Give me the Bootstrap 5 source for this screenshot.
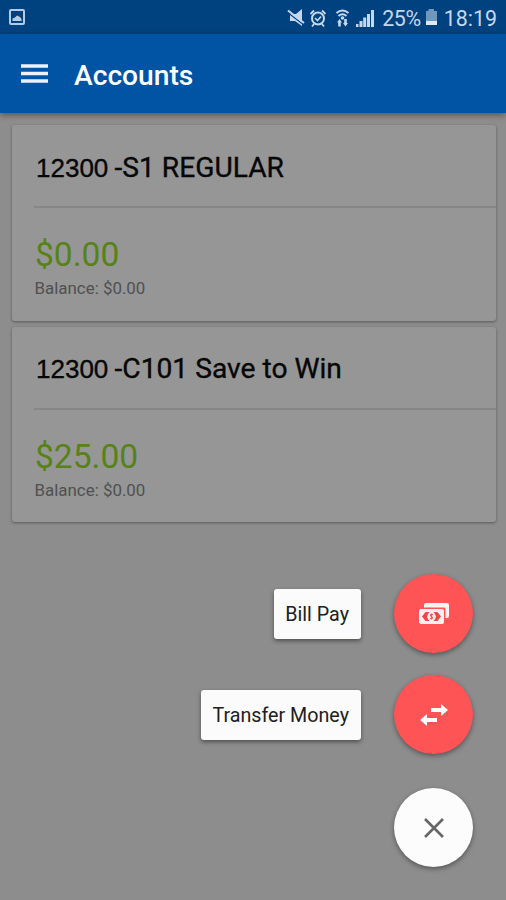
<!DOCTYPE html>
<html lang="en">
<head>
<meta charset="utf-8">
<meta name="viewport" content="width=device-width, initial-scale=1">
<title>Accounts</title>
<link href="https://cdn.jsdelivr.net/npm/bootstrap@5.3.0/dist/css/bootstrap.min.css" rel="stylesheet">
<style>
body{font-family:Roboto,sans-serif;background:#8d8d8d;height:900px;overflow:hidden;color:#070707}
.status-bar{height:34px;background:#00427f;color:#c6d8ee;padding:0 9px 0 8px}
.status-text{font-size:21.4px;line-height:34px;padding-top:3px}
.battery-pct{letter-spacing:-.4px}
.app-bar{height:79px;background:#0054a3;box-shadow:0 2px 6px rgba(0,0,0,.4);padding-left:21px}
.app-title{font-size:28.2px;font-weight:500;line-height:36px;margin:4px 0 0 26px}
.accounts{padding:12px 10px 0 12px;gap:6px}
.account{height:195.5px;border:0;border-radius:3px;background:#969696;color:#070707;box-shadow:0 1px 3px rgba(0,0,0,.38)}
.account-head{height:83px;margin-left:22px;border-bottom:2px solid #878787;padding:5px 0 0 2px;-webkit-text-stroke:.35px #070707}
.account-no{font:26px "Liberation Sans",sans-serif;width:78.500px}
.account-name{font-size:28.2px}
.amount{font-size:33.600px;line-height:40px;color:#568218;margin:27px 0 0 23px}
.balance{font-size:16.9px;line-height:20px;color:#505050;margin:3px 0 0 22.5px}
.actions{padding:0 33px 33px 0}
.action-label{background:#fbfbfb;border-radius:3px;height:50px;padding:3px 12px 0 11.500px;font-size:19.7px;color:#202020;box-shadow:0 2px 4px rgba(0,0,0,.45);margin-right:33px}
.fab{width:79px;height:79px;border:0;border-radius:50%;background:#ff5456;color:#fff;box-shadow:0 2px 5px rgba(0,0,0,.4)}
.transfer{margin:22px 0 34px}
.fab-close{background:#fcfcfc;color:#666}
</style>
<script src="https://cdn.jsdelivr.net/npm/bootstrap@5.3.0/dist/js/bootstrap.bundle.min.js"></script>
</head>
<body class="d-flex flex-column">
<div class="status-bar d-flex align-items-center flex-shrink-0">
  <svg width="18" height="18" viewBox="0 0 18 18"><rect x="2" y="2" width="14" height="14" rx="1" fill="none" stroke="#b5cbe5" stroke-width="2"/><path d="M4.500 13V10.500L7 9.500L9 7.500L12 9L13.500 11V13Z" fill="#b5cbe5"/></svg>
  <div class="d-flex align-items-center ms-auto">
    <svg width="95" height="22" viewBox="-1 -1 95 22" fill="currentColor">
      <path d="M2 7H8L14 2V19L7 14H2Z"/><path d="M-1 5L16 18" stroke="#00427f" stroke-width="1.300"/><path d="M0 3.500L16 16" stroke="currentColor" stroke-width="2"/>
      <g fill="none" stroke="currentColor" stroke-width="2"><circle cx="30" cy="11.500" r="6"/><path d="M27 11L29.500 13.500L33 9.500" stroke-width="1.600"/><path d="M22.500 7L26 3.500M34 3.500L37.500 7M26 17L24 19.500M34 17L36 19.500" stroke-width="1.800"/></g>
      <g fill="none" stroke="currentColor" stroke-width="2"><path d="M48.500 6Q54.500 1 60.500 6M50.500 9Q54.500 5.500 58.500 9"/></g><circle cx="54.500" cy="11" r="1.800"/><path d="M49 15.500L51.500 12L54 15.500H52.800V19.500H50.200V15.500ZM55 16L57.500 19.500L60 16H58.800V12H56.200V16Z"/>
      <path d="M68 17h2.500v3H68zM71.500 14h3v6h-3zM75.200 10.500h3V20h-3zM79 7h3v13h-3zM83 3h3v17H83z"/>
    </svg>
    <span class="status-text battery-pct">25%</span>
    <svg class="battery ms-1" width="15" height="18" viewBox="0 0 15 18"><path d="M3.500 1H9V3H12V13H1V3H3.500Z" fill="#6f98bf"/><path d="M1 13H12V17H1Z" fill="#e0eaf5"/></svg>
    <span class="status-text clock ms-1">18:19</span>
  </div>
</div>
<header class="app-bar d-flex align-items-center flex-shrink-0">
  <svg width="27" height="20" viewBox="0 0 27 20"><path d="M0 2H27M0 9.500H27M0 17H27" stroke="#eef0fa" stroke-width="3.600"/></svg>
  <h1 class="app-title text-white">Accounts</h1>
</header>
<main class="accounts d-flex flex-column">
  <article class="card account">
    <div class="account-head d-flex align-items-center"><span class="account-no">12300</span><span class="account-name">-S1 REGULAR</span></div>
    <div class="amount"><span>$0.00</span></div>
    <div class="balance"><span>Balance: $0.00</span></div>
  </article>
  <article class="card account">
    <div class="account-head d-flex align-items-center"><span class="account-no">12300</span><span class="account-name">-C101 Save to Win</span></div>
    <div class="amount"><span>$25.00</span></div>
    <div class="balance"><span>Balance: $0.00</span></div>
  </article>
</main>
<div class="actions d-flex flex-column align-items-end mt-auto">
  <div class="d-flex align-items-center"><div class="action-label d-flex align-items-center"><span>Bill Pay</span></div>
    <button class="fab d-flex align-items-center justify-content-center p-0" aria-label="Bill Pay"><svg width="30" height="22" viewBox="0 0 30 22"><path d="M7 0H28Q30 0 30 2V13Q30 15 28 15H26.500V6Q26.500 4.500 25 4.500H5V2Q5 0 7 0Z" fill="#fff0ef"/><rect y="6" width="25" height="15" rx="2" fill="#fff0ef"/><path d="M3 13.500L6.500 9H10.500Q6 13.500 10.500 18H6.500ZM22 13.500L18.500 9H14.500Q19 13.500 14.500 18H18.500Z" fill="#e94749"/><path d="M14 11.500H12Q10.800 12.500 12.500 13.500T13 15.500H11M12.500 10.500V16.500" fill="none" stroke="#ff5456" stroke-width="1.200"/></svg></button></div>
  <div class="transfer d-flex align-items-center"><div class="action-label d-flex align-items-center"><span>Transfer Money</span></div>
    <button class="fab d-flex align-items-center justify-content-center p-0" aria-label="Transfer Money"><svg width="28" height="22" viewBox="0 0 28 22"><path d="M11 4H21V0L28 6L21 12V8H11ZM17 14H7V10L0 16L7 22V18H17Z" fill="#fff"/></svg></button></div>
  <button class="fab fab-close d-flex align-items-center justify-content-center p-0" aria-label="Close"><svg width="20" height="20" viewBox="0 0 20 20"><path d="M1 1L19 19M19 1L1 19" stroke="currentColor" stroke-width="2.600"/></svg></button>
</div>
</body>
</html>
